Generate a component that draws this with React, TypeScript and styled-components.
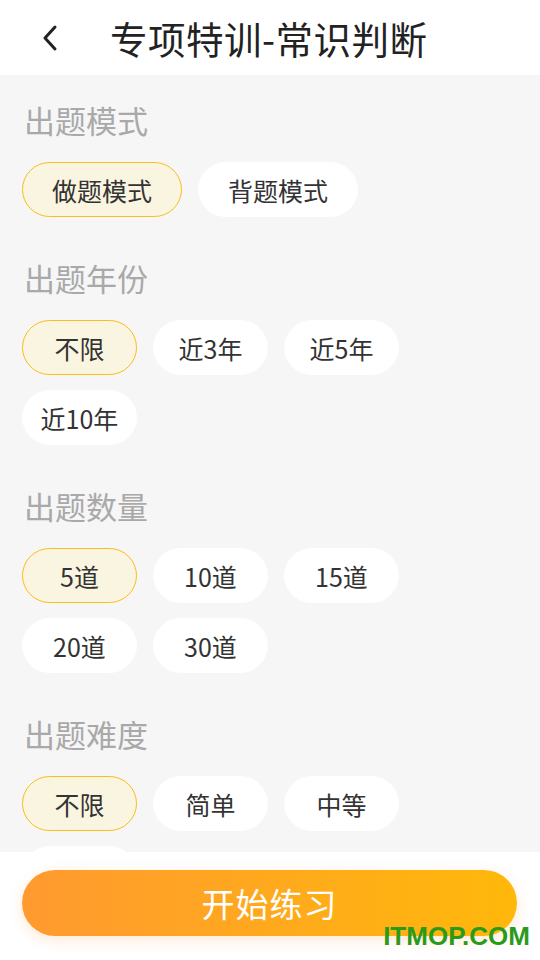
import React from 'react';
import styled, { createGlobalStyle } from 'styled-components';

const GlobalStyle = createGlobalStyle`
    html, body {
        margin: 0;
        padding: 0;
        background: #ffffff;
    }
    body {
        font-family: 'Noto Sans CJK SC', 'Noto Sans', sans-serif;
    }
`;

const Page = styled.div`
    position: relative;
    width: 540px;
    height: 960px;
    display: flex;
    flex-direction: column;
    overflow: hidden;
    background: #ffffff;
`;

const Header = styled.header`
    height: 75px;
    flex: none;
    display: flex;
    align-items: center;
    padding-left: 40px;
    background: #ffffff;
`;

const BackButton = styled.button`
    width: 20px;
    height: 30px;
    padding: 0;
    border: none;
    background: none;
    display: flex;
    align-items: center;
    justify-content: center;
    margin-right: 50px;
`;

const Title = styled.h1`
    margin: 0;
    font-size: 37.5px;
    font-weight: 400;
    color: #222222;
    letter-spacing: 0.5px;
`;

const Body = styled.main`
    flex: 1;
    overflow: hidden;
    background: #f6f6f6;
    padding: 25px 22px 0;
`;

const Section = styled.section`
    margin-bottom: 41px;
`;

const SectionTitle = styled.h2`
    margin: 0 0 22px 2px;
    height: 40px;
    line-height: 40px;
    font-size: 31px;
    font-weight: 400;
    color: #a9a9a9;
`;

const ChipList = styled.div`
    display: flex;
    flex-wrap: wrap;
    column-gap: 16px;
    row-gap: 15px;
`;

const Chip = styled.button<{ $active?: boolean; $wide?: boolean }>`
    box-sizing: border-box;
    width: ${p => (p.$wide ? '160px' : '115px')};
    height: 55px;
    padding: 0;
    border-radius: 28px;
    border: 1.5px solid ${p => (p.$active ? '#fbbd17' : '#ffffff')};
    background: ${p => (p.$active ? '#faf5e1' : '#ffffff')};
    color: #333333;
    font-family: 'Noto Sans CJK SC', 'Noto Sans', sans-serif;
    font-size: 25px;
    display: flex;
    align-items: center;
    justify-content: center;
`;

const Footer = styled.footer`
    flex: none;
    height: 108px;
    background: #ffffff;
    padding: 18px 23px 0 22px;
    box-sizing: border-box;
`;

const StartButton = styled.button`
    width: 100%;
    height: 66px;
    border: none;
    border-radius: 33px;
    background: linear-gradient(90deg, #ff9a30 0%, #ffb80a 100%);
    box-shadow: 0 4px 14px rgba(255, 150, 60, 0.22);
    color: #ffffff;
    font-family: 'Noto Sans CJK SC', 'Noto Sans', sans-serif;
    font-size: 33px;
    letter-spacing: 1px;
`;

const Watermark = styled.div`
    position: absolute;
    right: 10px;
    bottom: 8px;
    font-family: 'Liberation Sans', Arial, sans-serif;
    font-weight: 700;
    font-size: 26px;
    color: #2a9a1b;
`;

const BackIcon = () => (
    <svg width="18" height="28" viewBox="0 0 18 28" fill="none">
        <path
            d="M14 3 L4 14 L14 25"
            stroke="#222"
            strokeWidth="3"
            strokeLinecap="round"
            strokeLinejoin="round"
        />
    </svg>
);

interface IGroup {
    title: string;
    options: string[];
    wide?: boolean;
}

const groups: IGroup[] = [
    { title: '出题模式', options: ['做题模式', '背题模式'], wide: true },
    { title: '出题年份', options: ['不限', '近3年', '近5年', '近10年'] },
    { title: '出题数量', options: ['5道', '10道', '15道', '20道', '30道'] },
    { title: '出题难度', options: ['不限', '简单', '中等', '困难'] },
];

const App: React.FunctionComponent = () => {
    return (
        <Page>
            <GlobalStyle />
            <Header>
                <BackButton>
                    <BackIcon />
                </BackButton>
                <Title>专项特训-常识判断</Title>
            </Header>
            <Body>
                {groups.map(group => (
                    <Section key={group.title}>
                        <SectionTitle>{group.title}</SectionTitle>
                        <ChipList>
                            {group.options.map((opt, i) => (
                                <Chip key={opt} $active={i === 0} $wide={group.wide}>
                                    {opt}
                                </Chip>
                            ))}
                        </ChipList>
                    </Section>
                ))}
            </Body>
            <Footer>
                <StartButton>开始练习</StartButton>
            </Footer>
            <Watermark>ITMOP.COM</Watermark>
        </Page>
    );
};

export default App;
